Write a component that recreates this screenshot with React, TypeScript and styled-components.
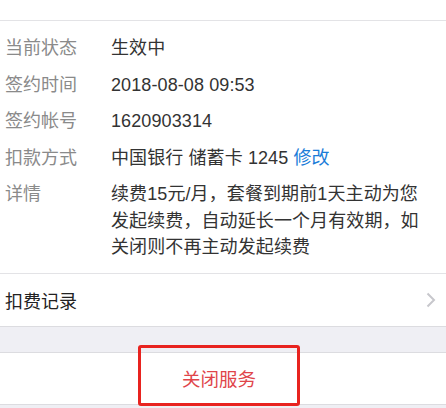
import React from "react";
import styled, { createGlobalStyle } from "styled-components";

const GlobalStyle = createGlobalStyle`
  * {
    margin: 0;
    padding: 0;
    box-sizing: border-box;
  }
  body {
    background: #efeff4;
    font-family: "Liberation Sans", "Noto Sans CJK SC", sans-serif;
    overflow: hidden;
  }
`;

const Page = styled.div`
  width: 446px;
  height: 408px;
  position: relative;
`;

const TopBlank = styled.div`
  height: 21px;
  background: #fff;
  border-bottom: 1px solid #e3e3e6;
`;

const InfoList = styled.div`
  background: #fff;
  padding: 9px 0 7px;
  border-bottom: 1px solid #e3e3e6;
`;

const InfoRow = styled.div`
  display: flex;
  padding: 5px 0;
  font-size: 18px;
  line-height: 26.5px;
`;

const Label = styled.div`
  width: 111px;
  flex-shrink: 0;
  padding-left: 5px;
  color: #8a8a8a;
`;

const Value = styled.div`
  flex: 1;
  padding-right: 10px;
  color: #333;
  letter-spacing: 0.1px;
`;

const Link = styled.span`
  color: #1a7cd8;
`;

const NavRow = styled.div`
  height: 53px;
  display: flex;
  align-items: center;
  justify-content: space-between;
  padding: 0 10px 0 5px;
  background: #fff;
  border-bottom: 1px solid #dcdce0;
  font-size: 18px;
  color: #222;
`;

const Gap = styled.div`
  height: 25px;
`;

const ActionRow = styled.div`
  height: 53px;
  display: flex;
  align-items: center;
  justify-content: center;
  background: #fff;
  border-top: 1px solid #dcdce0;
  border-bottom: 1px solid #dcdce0;
  font-size: 18.5px;
  color: #e0454a;
  padding-right: 8px;
`;

const Highlight = styled.div`
  position: absolute;
  left: 138px;
  top: 345px;
  width: 162px;
  height: 61px;
  border: 3px solid #e8231f;
  border-radius: 3px;
`;

const rows: { label: string; value: React.ReactNode }[] = [
  { label: "当前状态", value: "生效中" },
  { label: "签约时间", value: "2018-08-08 09:53" },
  { label: "签约帐号", value: "1620903314" },
  {
    label: "扣款方式",
    value: (
      <>
        中国银行 储蓄卡 1245 <Link>修改</Link>
      </>
    ),
  },
  {
    label: "详情",
    value: "续费15元/月，套餐到期前1天主动为您发起续费，自动延长一个月有效期，如关闭则不再主动发起续费",
  },
];

const App = () => {
  return (
    <>
      <GlobalStyle />
      <Page>
        <TopBlank />
        <InfoList>
          {rows.map((r) => (
            <InfoRow key={r.label}>
              <Label>{r.label}</Label>
              <Value>{r.value}</Value>
            </InfoRow>
          ))}
        </InfoList>
        <NavRow>
          扣费记录
          <svg width="10" height="16" viewBox="0 0 10 16">
            <path d="M1.5 1.5 L8 8 L1.5 14.5" fill="none" stroke="#c7c7cc" strokeWidth="2" />
          </svg>
        </NavRow>
        <Gap />
        <ActionRow>关闭服务</ActionRow>
        <Highlight />
      </Page>
    </>
  );
};

export default App;
